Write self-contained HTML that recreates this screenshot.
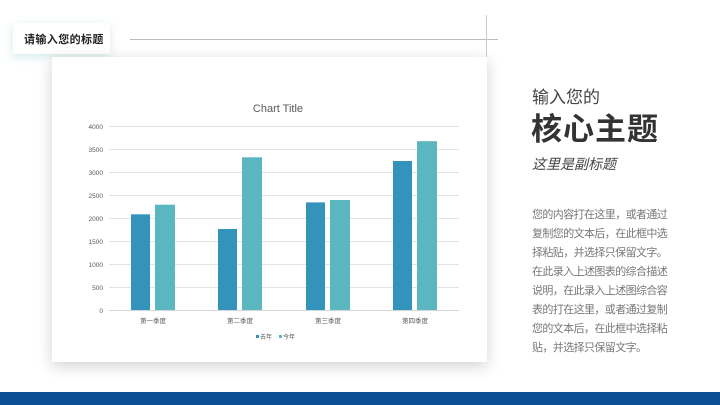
<!DOCTYPE html>
<html><head><meta charset="utf-8"><style>
body{margin:0;width:720px;height:405px;background:#fff;position:relative;overflow:hidden;font-family:"Liberation Sans","Noto Sans CJK SC",sans-serif}
.abs{position:absolute}
</style></head><body>
<div class="abs" style="left:13px;top:23px;width:97px;height:31px;background:#fff;box-shadow:0 3px 8px rgba(80,170,170,0.25)"></div>
<div class="abs" style="left:24px;top:31px;font-size:11px;font-weight:bold;letter-spacing:0.4px;color:#222;white-space:nowrap">请输入您的标题</div>
<div class="abs" style="left:130px;top:39px;width:368px;height:1px;background:#bbb"></div>
<div class="abs" style="left:486px;top:15px;width:1px;height:48px;background:#ccc"></div>
<div class="abs" style="left:52px;top:57px;width:435px;height:305px;background:#fff;box-shadow:0 4px 14px rgba(0,0,0,0.18)"></div>
<svg class="abs" style="left:0;top:0" width="720" height="405" font-family="Liberation Sans, Noto Sans CJK SC, sans-serif">
<text x="278" y="112" font-size="11" fill="#595959" text-anchor="middle">Chart Title</text>
<g stroke="#e3e3e3" stroke-width="1">
<line x1="109" x2="459" y1="126.5" y2="126.5"/><line x1="109" x2="459" y1="149.5" y2="149.5"/><line x1="109" x2="459" y1="172.5" y2="172.5"/><line x1="109" x2="459" y1="195.5" y2="195.5"/><line x1="109" x2="459" y1="218.5" y2="218.5"/><line x1="109" x2="459" y1="241.5" y2="241.5"/><line x1="109" x2="459" y1="264.5" y2="264.5"/><line x1="109" x2="459" y1="287.5" y2="287.5"/><line x1="109" x2="459" y1="310.5" y2="310.5" stroke="#d5d5d5"/>
</g>
<g font-size="6.5" fill="#595959" text-anchor="end">
<text x="103" y="129">4000</text><text x="103" y="152">3500</text><text x="103" y="175">3000</text><text x="103" y="198">2500</text><text x="103" y="221">2000</text><text x="103" y="244">1500</text><text x="103" y="267">1000</text><text x="103" y="290">500</text><text x="103" y="313">0</text>
</g>
<g fill="#3393bb">
<rect x="131" y="214.3" width="19" height="95.7"/><rect x="218" y="229" width="19" height="81"/><rect x="306" y="202.4" width="19" height="107.6"/><rect x="393" y="161" width="19" height="149"/>
</g>
<g fill="#5bb7bf">
<rect x="155" y="204.7" width="20" height="105.3"/><rect x="242" y="157.3" width="20" height="152.7"/><rect x="330" y="200" width="20" height="110"/><rect x="417" y="141.2" width="20" height="168.8"/>
</g>
<g font-size="6.5" fill="#595959" text-anchor="middle">
<text x="153" y="323">第一季度</text><text x="240" y="323">第二季度</text><text x="328" y="323">第三季度</text><text x="415" y="323">第四季度</text>
</g>
<rect x="256" y="335" width="3" height="3" fill="#3393bb"/><text x="260" y="339" font-size="6" fill="#595959">去年</text>
<rect x="279" y="335" width="3" height="3" fill="#5bb7bf"/><text x="283" y="339" font-size="6" fill="#595959">今年</text>
</svg>
<div class="abs" style="left:532px;top:83px;font-size:17px;color:#444">输入您的</div>
<div class="abs" style="left:531px;top:104px;font-size:31px;font-weight:bold;color:#333;letter-spacing:1px">核心主题</div>
<div class="abs" style="left:532px;top:154px;font-size:14px;font-style:italic;color:#444">这里是副标题</div>
<div class="abs" style="left:532px;top:206px;font-size:11px;letter-spacing:-0.6px;line-height:19px;color:#777;white-space:nowrap">您的内容打在这里，或者通过<br>复制您的文本后，在此框中选<br>择粘贴，并选择只保留文字。<br>在此录入上述图表的综合描述<br>说明，在此录入上述图综合容<br>表的打在这里，或者通过复制<br>您的文本后，在此框中选择粘<br>贴，并选择只保留文字。</div>
<div class="abs" style="left:0;top:392px;width:720px;height:13px;background:#0d4f94"></div>
</body></html>
